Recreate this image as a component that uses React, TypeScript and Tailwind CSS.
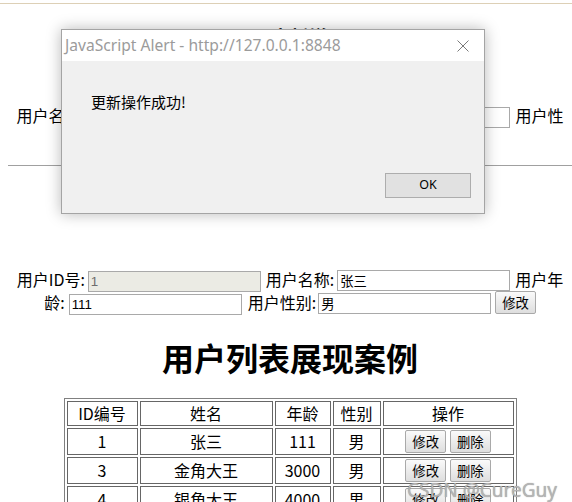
import React from "react";

function Field({ value, disabled }: { value: string; disabled?: boolean }) {
  return (
    <input
      readOnly
      value={value}
      className={`w-[173px] h-[21px] border border-[#a9a9a9] px-[2px] text-[13.33px] leading-none outline-none font-['Liberation_Sans','Noto_Sans_CJK_SC',sans-serif] ${
        disabled ? "bg-[#ebebe4] text-[#6d6d6d]" : "bg-white text-black"
      }`}
    />
  );
}

function Btn({ children, className = "" }: { children: React.ReactNode; className?: string }) {
  return (
    <button
      className={`h-[23px] px-[6px] border border-[#a9a9a9] rounded-[2px] bg-linear-to-b from-[#fafafa] to-[#dedede] text-[13.33px] leading-none text-black font-['Noto_Sans_CJK_SC',sans-serif] ${className}`}
    >
      {children}
    </button>
  );
}

const rows = [
  ["1", "张三", "111", "男"],
  ["3", "金角大王", "3000", "男"],
  ["4", "银角大王", "4000", "男"],
];

export default function App() {
  return (
    <div className="relative w-[572px] h-[502px] overflow-hidden bg-white text-black font-['Noto_Sans_CJK_SC','Noto_Sans',sans-serif]">
      <div className="h-[3px]" />
      <div className="h-px bg-[#ddd0b6]" />
      <div className="ml-[8px] w-[564px]">
        <h3 className="mt-[20px] text-center text-[18.72px] font-bold leading-[24px]">用户新增</h3>

        {/* add form (mostly hidden behind dialog) */}
        <div className="mt-[56px] flex h-[23px] items-center justify-center whitespace-nowrap text-[16px] leading-[23px]">
          <span>用户名称:</span>
          <span className="ml-[3px]"><Field value="" /></span>
          <span className="ml-[5px]">用户年龄:</span>
          <span className="ml-[3px]"><Field value="" /></span>
          <span className="ml-[5px]">用户性</span>
        </div>
        <div className="flex h-[23px] items-center justify-center whitespace-nowrap text-[16px] leading-[23px]">
          <span>别:</span>
          <span className="ml-[4px]"><Field value="" /></span>
          <Btn className="ml-[4px]">新增</Btn>
        </div>

        <div className="mt-[15px] border-t border-[#a0a0a0]" />

        {/* update form */}
        <div className="mt-[102px] flex h-[23px] items-center justify-center whitespace-nowrap text-[16px] leading-[23px]">
          <span>用户ID号:</span>
          <span className="ml-[3px]"><Field value="1" disabled /></span>
          <span className="ml-[5px]">用户名称:</span>
          <span className="ml-[3px]"><Field value="张三" /></span>
          <span className="ml-[5px]">用户年</span>
        </div>
        <div className="flex h-[23px] items-center justify-center whitespace-nowrap text-[16px] leading-[23px]">
          <span>龄:</span>
          <span className="ml-[4px]"><Field value="111" /></span>
          <span className="ml-[6px]">用户性别:</span>
          <span className="ml-[2px]"><Field value="男" /></span>
          <Btn className="ml-[4px]">修改</Btn>
        </div>

        <h1 className="mt-[23px] text-center text-[32px] font-bold leading-[40px]">用户列表展现案例</h1>

        <table className="mx-auto mt-[21px] w-[453px] table-fixed border-separate border-spacing-[2px] border border-[#808080] text-[16px] leading-[21px]">
          <thead>
            <tr>
              <th className="w-[71px] h-[25px] border border-[#666] p-[1px] font-normal">ID编号</th>
              <th className="w-[133px] h-[25px] border border-[#666] p-[1px] font-normal">姓名</th>
              <th className="w-[56px] h-[25px] border border-[#666] p-[1px] font-normal">年龄</th>
              <th className="w-[48px] h-[25px] border border-[#666] p-[1px] font-normal">性别</th>
              <th className="w-[131px] h-[25px] border border-[#666] p-[1px] font-normal">操作</th>
            </tr>
          </thead>
          <tbody>
            {rows.map((r) => (
              <tr key={r[0]}>
                {r.map((c, i) => (
                  <td key={i} className="h-[27px] border border-[#666] p-[1px] text-center">
                    {c}
                  </td>
                ))}
                <td className="h-[27px] border border-[#666] p-[1px] text-center">
                  <div className="flex items-center justify-center gap-[4px]">
                    <Btn className="h-[22px]">修改</Btn>
                    <Btn className="h-[22px]">删除</Btn>
                  </div>
                </td>
              </tr>
            ))}
          </tbody>
        </table>
      </div>

      {/* watermark */}
      <div className="absolute left-[407px] top-[478px] text-[19px] leading-[24px] text-[#b4b4b4] font-['Noto_Sans',sans-serif] [text-shadow:0_0_1px_rgba(80,80,80,0.55)]">
        CSDN @CureGuy
      </div>

      {/* alert dialog */}
      <div className="absolute left-[61px] top-[29px] w-[424px] h-[185px] border border-[#a4a4a4] bg-[#f0f0f0] shadow-[0_0_14px_rgba(0,0,0,0.28)] flex flex-col">
        <div className="h-[31px] bg-white flex items-center justify-between pl-[3px] pr-[15px]">
          <span className="text-[15.6px] text-[#9b9b9b] font-['Noto_Sans',sans-serif] leading-none">
            JavaScript Alert - http://127.0.0.1:8848
          </span>
          <svg width="12" height="12" viewBox="0 0 12 12" className="shrink-0">
            <path d="M0.5 0.5 L11.5 11.5 M11.5 0.5 L0.5 11.5" stroke="#7a7a7a" strokeWidth="1" fill="none" />
          </svg>
        </div>
        <div className="flex-1 flex flex-col">
          <div className="mt-[31px] ml-[29px] text-[15px] leading-[20px]">更新操作成功!</div>
          <div className="mt-auto mb-[15px] mr-[13px] flex justify-end">
            <button className="w-[86px] h-[25px] border border-[#adadad] bg-[#e1e1e1] text-[12.5px] leading-none font-['Noto_Sans',sans-serif] text-black">
              OK
            </button>
          </div>
        </div>
      </div>
    </div>
  );
}
